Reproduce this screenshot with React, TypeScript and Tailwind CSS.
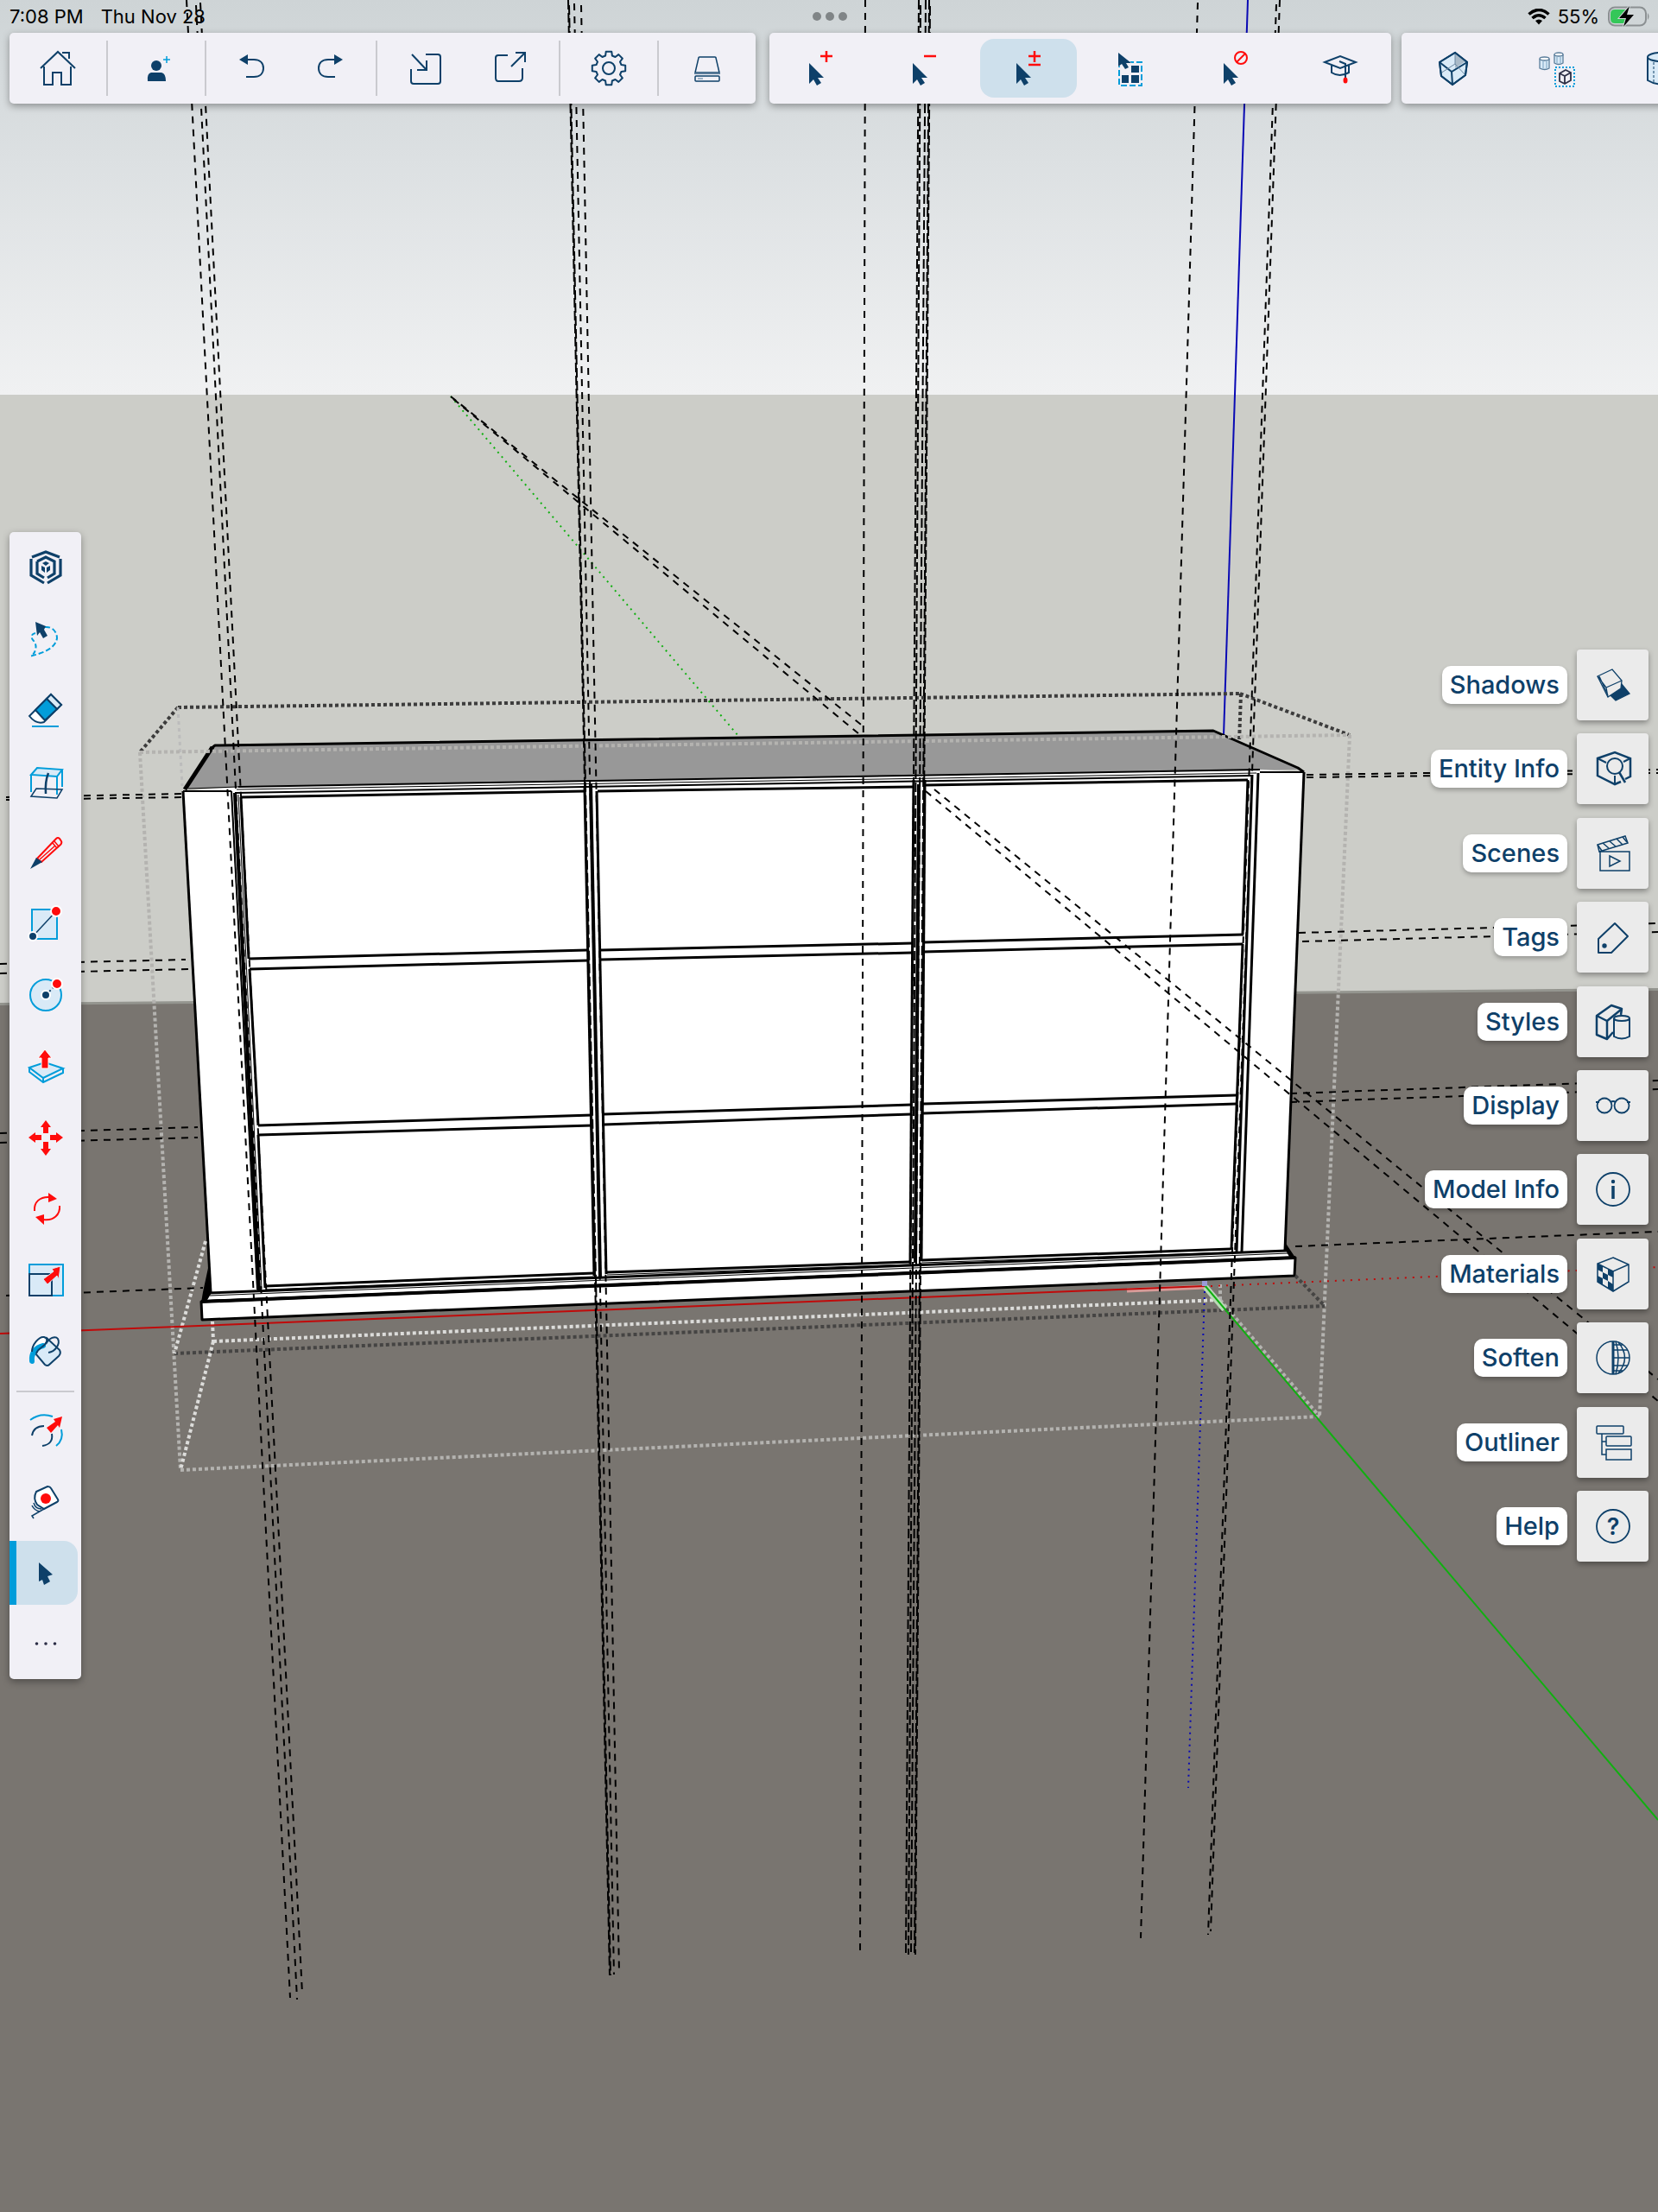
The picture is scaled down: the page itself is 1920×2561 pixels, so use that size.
import type { ReactNode } from 'react'

const NAVY = '#0e4069'
const BLUE = '#019dda'
const RED = '#ff0c0c'
const PALE = '#d9eaf7'

type Seg = [number, number, number, number]

function Icon({ children, width = 2 }: { children: ReactNode, width?: number }) {
    return (
        <svg
            viewBox="0 0 40 40"
            className="w-10 h-10 overflow-visible"
            fill="none"
            stroke={NAVY}
            strokeWidth={width}
            aria-hidden="true"
        >
            {children}
        </svg>
    )
}

function Lines({ segs, color = '#000', width = 2, dash }: { segs: Seg[], color?: string, width?: number, dash?: string }) {
    return (
        <g stroke={color} strokeWidth={width} strokeDasharray={dash} fill="none">
            {segs.map(([x1, y1, x2, y2], i) => (
                <line key={i} x1={x1} y1={y1} x2={x2} y2={y2} />
            ))}
        </g>
    )
}

// construction guides behind and across the cabinet
const guides: Seg[] = [
    [216, 0, 336, 2313], [227, 6, 344, 2315], [232, 3, 350, 2308],
    [665, 4, 711, 2286], [673, 6, 717, 2284],
    [1002, 0, 996, 2263],
    [1387, 3, 1321, 2244],
    [1478, 5, 1399, 2240], [1482, 0, 1402, 2236],
    [522, 459, 1001, 842], [525, 462, 995, 850],
    [1082, 914, 1920, 1597], [1072, 916, 1920, 1622],
    [7, 923, 211, 919], [7, 926, 211, 923],
    [1513, 897, 1920, 891], [1513, 900, 1920, 895],
    [0, 1116, 215, 1111], [0, 1127, 221, 1122],
    [1504, 1080, 1920, 1069], [1508, 1090, 1920, 1079],
    [0, 1312, 229, 1305], [0, 1323, 229, 1317],
    [1494, 1266, 1920, 1251], [1494, 1276, 1920, 1261],
    [7, 1500, 235, 1491], [1500, 1443, 1920, 1426],
]

const denseGuides: Seg[] = [
    [658, 0, 706, 2287], [659, 6, 707, 2287], [1064, 0, 1049, 2263], [1066, 6, 1052, 2263],
    [1072, 0, 1055, 2260], [1076, 0, 1059, 2263], [1077, 7, 1060, 2263],
]

const boxDark: Seg[] = [
    [206, 819, 1436, 803], [206, 819, 162, 871], [1436, 803, 1563, 851], [1437, 803, 1435, 860],
]
const boxGround: Seg[] = [[202, 1567, 1534, 1512], [1500, 1477, 1532, 1510]]
const boxGrey: Seg[] = [
    [162, 871, 1563, 851], [162, 871, 209, 1702], [1563, 851, 1528, 1640],
    [209, 1702, 1528, 1640], [1413, 1505, 1528, 1640], [1413, 1487, 1413, 1505],
]
const boxLight: Seg[] = [
    [247, 1553, 1413, 1505], [246, 1530, 247, 1553], [247, 1553, 209, 1702], [238, 1437, 202, 1567],
]

const cabinetThin: Seg[] = [
    [218, 913, 276, 911], [274, 914, 1455, 895],
    [268, 916, 298, 1493], [276, 920, 303, 1492],
    [308, 1493, 688, 1478], [703, 1476, 1053, 1464], [1067, 1462, 1425, 1450],
    [243, 1500, 1492, 1451],
]
const cabinet: Seg[] = [
    [276, 911, 1459, 891], [212, 916, 268, 916], [1459, 894, 1510, 894],
    [268, 916, 298, 1493],
    [272, 918, 677, 911], [677, 911, 1450, 898],
]
const cabinetMid: Seg[] = [
    [279, 923, 677, 916], [692, 916, 1057, 911], [1072, 909, 1445, 903],
    [279, 923, 288, 1110], [289, 1122, 299, 1303], [299, 1314, 307, 1491],
    [288, 1110, 680, 1100], [289, 1122, 681, 1112],
    [696, 1100, 1057, 1092], [696, 1111, 1057, 1103],
    [1069, 1091, 1440, 1082], [1069, 1102, 1439, 1093],
    [299, 1303, 686, 1291], [299, 1314, 686, 1303],
    [699, 1290, 1056, 1279], [699, 1302, 1056, 1290],
    [1069, 1278, 1432, 1268], [1069, 1289, 1432, 1278],
    [308, 1489, 688, 1474], [703, 1473, 1053, 1461], [1067, 1459, 1425, 1446],
    [241, 1497, 1490, 1448],
    [677, 911, 688, 1477], [1445, 903, 1439, 1082], [1439, 1093, 1426, 1447],
    [1450, 897, 1432, 1449], [1457, 895, 1438, 1449],
    [691, 916, 702, 1475], [1058, 903, 1054, 1463], [1071, 903, 1067, 1460],
    [212, 916, 244, 1496], [1510, 894, 1488, 1448],
]
const cabinetBold: Seg[] = [
    [272, 918, 300, 1494], [684, 908, 695, 1478], [1064, 908, 1060, 1462],
    [233, 1507, 1500, 1456],
]

function Scene() {
    return (
        <svg
            viewBox="0 0 1920 2561"
            preserveAspectRatio="xMidYMin slice"
            className="absolute inset-0 w-full h-full"
            role="img"
            aria-label="Cabinet model"
        >
            <defs>
                <linearGradient id="sky" x1="0" y1="0" x2="0" y2="1">
                    <stop offset="0" stopColor="#ced4d6" />
                    <stop offset="0.4" stopColor="#dce0e2" />
                    <stop offset="1" stopColor="#f0f1f2" />
                </linearGradient>
            </defs>
            <rect width="1920" height="457" fill="url(#sky)" />
            <rect y="457" width="1920" height="720" fill="#cccdc8" />
            <path d="M0 1161L1920 1144V2561H0Z" fill="#94958f" />
            <path d="M0 1164L1920 1147V2561H0Z" fill="#797570" />

            <Lines segs={[[522, 459, 855, 852]]} color="#12b012" dash="2 5" />
            <Lines segs={[[1445, 0, 1417, 852]]} color="#0a0ab4" />
            <Lines segs={boxDark} color="#3c3c3c" width={4} dash="4 3" />
            <Lines segs={[[206, 819, 211, 910]]} color="#bcbcbc" width={3} dash="4 4" />

            <path d="M248 863L1405 846L1507 891L276 911L216 913Z" fill="#989898" />
            <path d="M212 916L276 911L1459 891L1510 894L1488 1448L1500 1456L1499 1477L234 1529L233 1507L244 1495Z" fill="#fff" />
            <path d="M241 1468L245 1496L1488 1448V1438L1500 1456L233 1508L235 1496Z" fill="#000" />
            <path d="M246 1495L1488 1446L1493 1455L240 1505Z" fill="#fff" />
            <Lines segs={cabinetThin} width={1} />
            <Lines segs={cabinet} />
            <Lines segs={cabinetMid} width={3} />
            <Lines segs={cabinetBold} width={4} />
            <g stroke="#000" fill="none" strokeWidth="3" strokeLinejoin="round">
                <path d="M244 867L249 863L1405 846L1503 889L1510 894" />
                <path d="M246 865L214 914" strokeWidth="5" />
                <path d="M233 1507L234 1528L1499 1477L1500 1456Z" />
            </g>

            <Lines segs={boxGrey} color="#b4b3b0" width={4} dash="4 3" />
            <Lines segs={boxGround} color="#454443" width={4} dash="4 3" />
            <Lines segs={boxLight} color="#dcdcda" width={4} dash="4 3" />

            <Lines segs={[[1305, 1494, 1395, 1490]]} color="#d89b98" width={5} />
            <Lines segs={[[0, 1544, 1395, 1489]]} color="#c00a0a" />
            <Lines segs={[[1402, 1489, 1920, 1467]]} color="#c00a0a" dash="2 7" />
            <Lines segs={[[1396, 1490, 1418, 1516]]} color="#b9d8b6" width={7} />
            <Lines segs={[[1395, 1488, 1920, 2107]]} color="#10b010" />
            <Lines segs={[[1395, 1495, 1376, 2070]]} color="#0a0ab4" dash="2 5" />
            <Lines segs={guides} dash="8 7" />
            <Lines segs={denseGuides} width={2} dash="11 4" />
            <rect x="1392" y="1483" width="6" height="6" fill="#9b9bd8" />
        </svg>
    )
}

const cursor = 'M0 0V24L5 19L9 26L14 23L10 17H17Z'

function gearPath() {
    const pts: string[] = []
    for (let i = 0; i < 8; i++) {
        const base = (i * Math.PI) / 4 - Math.PI / 2
        const steps = [[-0.26, 15], [-0.17, 19.5], [0.17, 19.5], [0.26, 15]]
        for (const [da, r] of steps) {
            pts.push(`${(20 + r * Math.cos(base + da)).toFixed(1)} ${(20 + r * Math.sin(base + da)).toFixed(1)}`)
        }
    }
    return `M${pts.join('L')}Z`
}

const icons: Record<string, ReactNode> = {
    home: (
        <Icon>
            <path d="M0 20L20 1L40 20M25 2H33V9M4 18V39H14V25H24V39H35V18" />
        </Icon>
    ),
    user: (
        <Icon>
            <circle cx="20" cy="17" r="6" fill={NAVY} stroke="none" />
            <path d="M10 35Q9 26 14 25H26Q31 26 31 35Z" fill={NAVY} stroke="none" />
            <path d="M32 6V14M28 10H36" stroke={BLUE} strokeWidth="1.5" />
        </Icon>
    ),
    undo: (
        <Icon>
            <path d="M5 10L15 4V16Z" fill={NAVY} stroke="none" />
            <path d="M14 10H22C29 10 33 14 33 20C33 26 29 30 22 30H13" />
        </Icon>
    ),
    redo: (
        <Icon>
            <path d="M35 10L25 4V16Z" fill={NAVY} stroke="none" />
            <path d="M26 10H18C11 10 7 14 7 20C7 26 11 30 18 30H26" />
        </Icon>
    ),
    importFile: (
        <Icon>
            <path d="M20 4H34Q37 4 37 7V35Q37 38 34 38H6Q3 38 3 35V21M4 4L21 22M21 11V22H10" />
        </Icon>
    ),
    exportFile: (
        <Icon>
            <path d="M17 5H6Q3 5 3 8V31Q3 35 6 35H30Q34 35 34 31V20M21 18L37 2M26 2H37V13" />
        </Icon>
    ),
    gear: (
        <Icon>
            <path d={gearPath()} strokeLinejoin="round" />
            <circle cx="20" cy="20" r="7" />
        </Icon>
    ),
    drive: (
        <Icon width={1.5}>
            <path d="M11 7H29Q30 7 30 8L34 25H6L10 8Q10 7 11 7Z" />
            <path d="M5 26H35" strokeWidth="2" stroke="#5b7c99" />
            <rect x="6" y="29" width="28" height="6" rx="1" />
            <path d="M9 32H15" strokeWidth="2" stroke="#9fb3c6" />
        </Icon>
    ),
    addSelect: (
        <Icon>
            <path d={cursor} transform="translate(6 14)" fill={NAVY} stroke="none" />
            <path d="M26 0V13M19 6H33" stroke={RED} strokeWidth="2.5" />
        </Icon>
    ),
    subSelect: (
        <Icon>
            <path d={cursor} transform="translate(6 14)" fill={NAVY} stroke="none" />
            <path d="M19 6H33" stroke={RED} strokeWidth="2.5" />
        </Icon>
    ),
    toggleSelect: (
        <Icon>
            <path d={cursor} transform="translate(6 14)" fill={NAVY} stroke="none" />
            <path d="M27 0V13M20 6H34M20 16H34" stroke={RED} strokeWidth="2.5" />
        </Icon>
    ),
    selectAll: (
        <Icon>
            <rect x="5" y="13" width="26" height="27" stroke={BLUE} strokeDasharray="7 3" />
            <path d="M8 28H16V37H8ZM19 28H28V37H19ZM19 17H28V25H19Z" fill={NAVY} stroke="none" />
            <path d="M4 2V18L8 15L12 21L16 19L13 14H19Z" fill={NAVY} stroke="#f1f0f6" strokeWidth="1" paintOrder="stroke" />
        </Icon>
    ),
    deselect: (
        <Icon>
            <path d={cursor} transform="translate(6 14)" fill={NAVY} stroke="none" />
            <circle cx="26" cy="8" r="7" stroke={RED} />
            <path d="M21 13L31 3" stroke={RED} />
        </Icon>
    ),
    learn: (
        <Icon>
            <path d="M3 13L21 6L39 13L21 20ZM11 16V25Q20 31 31 25V16M20 12L27 15V32" />
            <ellipse cx="27" cy="34" rx="2.5" ry="3.5" fill={RED} stroke="none" />
        </Icon>
    ),
    solid: (
        <Icon>
            <path d="M4 13L22 2L36 13L34 28L19 39L6 29Z" fill={PALE} />
            <path d="M22 3L22 20L34 12Z" fill="#a9bac8" stroke="none" />
            <path d="M4 13L18 24L36 13M18 24L19 39" />
            <path d="M22 2V15L5 26M22 15L34 28" strokeWidth="1" stroke="#6b87a0" />
            <path d="M4 13L22 2L36 13L34 28L19 39L6 29Z" />
        </Icon>
    ),
    components: (
        <Icon width={1.3}>
            <path d="M0 9V20Q6 23 11 20V9M17 4V14Q22 17 27 14V4" fill={PALE} stroke="#5a7d9b" />
            <ellipse cx="5.5" cy="9" rx="5.5" ry="2" fill="#fff" stroke="#5a7d9b" />
            <ellipse cx="22" cy="4" rx="5" ry="2" fill="#fff" stroke="#5a7d9b" />
            <path d="M4 12V20M8 12V20M20 7V14M24 7V14" stroke="#8fb3ce" />
            <rect x="18" y="19" width="22" height="22" stroke={BLUE} strokeWidth="2" strokeDasharray="2 2" />
            <path d="M23 26L30 22L36 25V34L29 38L23 35ZM23 26L29 29V38M29 29L36 25" stroke="#2c2f45" strokeWidth="1.8" />
        </Icon>
    ),
    cylinder: (
        <Icon>
            <path d="M5 7V34Q20 43 35 34V7" fill={PALE} />
            <ellipse cx="20" cy="7" rx="15" ry="5" fill={PALE} />
            <path d="M12 13V38" strokeDasharray="3 2" strokeWidth="1" />
        </Icon>
    ),
    logo: (
        <Icon width={3.2}>
            <path d="M3 10V29L18 38M22 38L37 29V10M4 8L20 2L36 8" />
            <path d="M10 13V27L18 32M22 32L30 27V13L20 8L10 13" />
            <path d="M20 13L24 15L20 18L16 15ZM15 18L19 20V26L15 23ZM25 18L21 20V26L25 23Z" fill={NAVY} stroke="none" />
        </Icon>
    ),
    lasso: (
        <Icon>
            <path d="M19 6C27 5 33 11 33 19C31 31 17 36 1 40" stroke={BLUE} strokeDasharray="6 3" />
            <path d="M8 13C3 14 2 18 6 22C10 27 9 33 5 38" stroke={BLUE} strokeDasharray="5 3" />
            <path d="M8 0L20 5L18 9L22 16L17 19L13 12L10 16Z" fill={NAVY} stroke="none" />
        </Icon>
    ),
    eraser: (
        <Icon>
            <path d="M26 2L38 14L18 34Q9 37 1 27L8 20Z" fill="#fff" />
            <path d="M26 2L38 14L33 19L21 7Z" fill={PALE} />
            <path d="M21 7L33 19L19 32L8 20Z" fill={BLUE} />
            <path d="M4 39H35" stroke={BLUE} />
        </Icon>
    ),
    section: (
        <Icon>
            <path d="M3 12L10 4L39 6L33 14Z" fill={PALE} stroke={BLUE} />
            <path d="M3 12V32M33 14V35M39 6V26" stroke={BLUE} />
            <path d="M3 37L9 28L39 29L33 39Z" strokeWidth="1.5" />
            <path d="M23 10Q19 20 20 34" strokeWidth="2.5" />
        </Icon>
    ),
    pencil: (
        <Icon>
            <path d="M10 27L32 4Q34 2 36 4L38 7Q39 9 37 11L15 31Z" stroke={RED} />
            <path d="M28 9L33 15M30 7L35 13M13 28L31 12" stroke={RED} strokeWidth="1.5" />
            <path d="M2 39L9 26L16 31Z" fill={NAVY} stroke="none" />
        </Icon>
    ),
    rectangle: (
        <Icon>
            <rect x="4" y="3" width="29" height="34" fill={PALE} stroke={BLUE} />
            <path d="M5 34L32 5" strokeWidth="1.5" />
            <circle cx="5" cy="34" r="5" fill={NAVY} stroke="#fff" />
            <circle cx="32" cy="5" r="6" fill={RED} stroke="#fff" />
        </Icon>
    ),
    circle: (
        <Icon>
            <circle cx="20" cy="20" r="18" fill={PALE} stroke={BLUE} />
            <path d="M20 20L32 8" strokeDasharray="8 3 3 3" />
            <circle cx="20" cy="20" r="5" fill={NAVY} stroke="#fff" />
            <circle cx="33" cy="7" r="6" fill={RED} stroke="#fff" />
        </Icon>
    ),
    pushPull: (
        <Icon>
            <path d="M1 21L19 15L40 22L17 33Z" fill={PALE} stroke={BLUE} />
            <path d="M1 21V26L17 38L40 27V22M17 33V38" fill="none" stroke={BLUE} />
            <path d="M19 0L27 10H23V22H15V10H11Z" fill={RED} stroke="#fff" strokeWidth="1" />
        </Icon>
    ),
    move: (
        <Icon>
            <g fill={RED} stroke="none">
                <path d="M20 0L26 8H23V15H17V8H14Z" />
                <path d="M20 41L26 33H23V25H17V33H14Z" />
                <path d="M0 20L8 14V17H15V23H8V26Z" />
                <path d="M40 20L32 14V17H25V23H32V26Z" />
            </g>
        </Icon>
    ),
    rotate: (
        <Icon>
            <path d="M7 22C6 12 13 5 25 6M36 16C37 26 29 34 17 32" stroke={RED} />
            <path d="M23 1L33 8L23 12ZM8 29L18 26V38Z" fill={RED} stroke="none" />
        </Icon>
    ),
    scale: (
        <Icon>
            <rect x="1" y="2" width="39" height="36" fill={PALE} stroke={BLUE} />
            <path d="M1 13H27V38H1Z" />
            <path d="M37 4L27 7L29 10L17 19L22 25L33 15L35 19Z" fill={RED} stroke={PALE} strokeWidth="1" />
        </Icon>
    ),
    paint: (
        <Icon>
            <path d="M21 4L36 18Q38 22 35 25L24 35Q22 37 19 35L8 22Z" fill={PALE} />
            <path d="M4 20C4 12 12 2 18 3C24 5 21 11 15 15C12 17 10 19 9 22Z" fill="#fff" stroke="none" />
            <path d="M4 31C3 22 8 15 17 13" stroke={BLUE} strokeWidth="6" strokeLinecap="round" />
            <path d="M4 20C4 12 12 2 18 3C24 5 21 11 15 15C12 17 10 19 9 22" />
            <path d="M20 11C24 4 31 1 34 5C37 11 31 20 23 21" />
        </Icon>
    ),
    offset: (
        <Icon>
            <path d="M2 7Q14 -2 28 3M38 18Q41 30 32 37" stroke={BLUE} />
            <path d="M4 25Q6 14 18 14M27 23Q29 35 16 37" />
            <path d="M39 3L29 6L31 9L21 16L26 22L34 13L36 16Z" fill={RED} stroke="none" />
        </Icon>
    ),
    tape: (
        <Icon>
            <path d="M9 8L22 2Q25 2 26 4L34 17Q35 19 33 20L18 28L10 23Q5 16 9 8Z" fill="#fff" />
            <ellipse cx="20" cy="16" rx="6" ry="6" fill={RED} stroke="none" />
            <path d="M18 28L4 36L6 39M6 21Q8 28 15 28M4 24Q7 30 13 31" strokeWidth="1.5" />
        </Icon>
    ),
    select: (
        <Icon>
            <path d="M12 8V30L16 28L18 34L25 30L22 24L28 22Z" fill={NAVY} stroke="none" />
        </Icon>
    ),
    more: (
        <Icon>
            <g fill="#2b2c45" stroke="none">
                <circle cx="9.5" cy="20" r="1.8" />
                <circle cx="20" cy="20" r="1.8" />
                <circle cx="30.5" cy="20" r="1.8" />
            </g>
        </Icon>
    ),
    shadows: (
        <Icon width={1.3}>
            <path d="M29 18L39 30L23 38L17 32L29 24Z" fill={NAVY} />
            <path d="M2 10L19 2L30 15L29 24L14 34Z" fill="#ebebeb" />
            <path d="M2 10L12 23L30 15M12 23L14 34M4 10L14 32" />
        </Icon>
    ),
    entity: (
        <Icon>
            <path d="M29 35L22 38L2 28V8L22 1L40 8V29L34 32" strokeWidth="2.5" />
            <path d="M2 8L12 13M40 8L32 12M22 28V38" />
            <circle cx="22" cy="17" r="9" />
            <path d="M27 24L34 36" strokeWidth="2.5" />
        </Icon>
    ),
    scenes: (
        <Icon width={1.5}>
            <path d="M5 18H39V40H5ZM16 23L28 29L16 35ZM2 10L34 0L37 8L4 18Z" />
            <path d="M8 8L15 14M16 6L23 12M24 3L31 10M2 10L7 17M31 1L36 7" />
        </Icon>
    ),
    tags: (
        <Icon>
            <path d="M22 4L37 19L18 38H3V22Z" strokeLinejoin="round" />
            <circle cx="10" cy="30" r="2.7" fill={NAVY} stroke="none" />
        </Icon>
    ),
    styles: (
        <Icon>
            <path d="M1 13L18 1L30 5L29 12M1 13L13 19V40L1 35ZM13 19L29 6M13 40L20 32" strokeWidth="2.5" strokeLinejoin="round" />
            <path d="M21 16V37Q30 42 39 37V16" fill="#ebebeb" />
            <ellipse cx="30" cy="16" rx="9" ry="3" fill="#ebebeb" />
        </Icon>
    ),
    display: (
        <Icon width={1.8}>
            <circle cx="10" cy="20" r="8.5" />
            <circle cx="30" cy="20" r="8.5" />
            <path d="M0 16H4M36 16H40M17 16Q20 14 23 16" />
        </Icon>
    ),
    info: (
        <Icon width={1.8}>
            <circle cx="20" cy="20" r="19" />
            <circle cx="20" cy="11" r="2.2" fill={NAVY} stroke="none" />
            <path d="M20 16V31" strokeWidth="3.5" />
        </Icon>
    ),
    materials: (
        <Icon width={1.5}>
            <path d="M2 8L8 11V18L2 15ZM14 14L20 17V24L14 21ZM8 18L14 21V28L8 25ZM2 22L8 25V33L2 29ZM14 28L20 32V40L14 36Z" fill={NAVY} stroke="none" />
            <path d="M20 1L38 9V29L20 40L2 29V8ZM2 8L20 17L38 9M20 17V40" />
        </Icon>
    ),
    soften: (
        <Icon width={1.5}>
            <circle cx="20" cy="20" r="19" />
            <path d="M20 1V39" strokeWidth="3" />
            <path d="M20 11H37M20 20H39M20 29H37M23 1Q29 20 23 39M26 2Q41 20 26 38M20 5H31M20 35H31" />
        </Icon>
    ),
    outliner: (
        <Icon width={1.5}>
            <rect x="1" y="1" width="31" height="9" rx="1" />
            <rect x="12" y="13" width="29" height="11" rx="1" />
            <rect x="12" y="28" width="29" height="12" />
            <path d="M7 10V34H12M7 19H12" />
        </Icon>
    ),
    help: (
        <Icon width={1.8}>
            <circle cx="20" cy="20" r="19" />
            <text x="20" y="30" textAnchor="middle" fontSize="27" fontFamily="Inter, sans-serif" fontWeight="600" fill={NAVY} stroke="none">?</text>
        </Icon>
    ),
}

function ToolButton({ name, label, className = '' }: { name: string, label: string, className?: string }) {
    return (
        <button type="button" aria-label={label} className={`flex items-center justify-center ${className}`}>
            {icons[name]}
        </button>
    )
}

function Divider() {
    return <div className="w-[2px] h-16 bg-[#cacacf] shrink-0" />
}

const panel = 'bg-[#f1f0f6] rounded-[5px] shadow-[0_3px_8px_rgba(0,0,0,0.35)]'

function StatusBar() {
    return (
        <div className="flex items-center justify-between h-[38px] pl-[11px] pr-[9px] text-[22px] leading-[36px] text-black">
            <div className="flex flex-1 gap-5">
                <span>7:08 PM</span>
                <span>Thu Nov 28</span>
            </div>
            <div className="flex gap-[5px]">
                <span className="w-[10px] h-[10px] rounded-full bg-[#808587]" />
                <span className="w-[10px] h-[10px] rounded-full bg-[#808587]" />
                <span className="w-[10px] h-[10px] rounded-full bg-[#808587]" />
            </div>
            <div className="flex flex-1 items-center justify-end gap-[9px]">
                <svg viewBox="0 0 26 19" className="w-[26px] h-[19px]" fill="none" stroke="#000" strokeWidth="3.6" aria-hidden="true">
                    <path d="M1.5 6.5Q13 -3.5 24.5 6.5M5.5 11Q13 4.5 20.5 11" />
                    <path d="M9 14Q13 11 17 14L13 18.5Z" fill="#000" stroke="none" />
                </svg>
                <span>55%</span>
                <svg viewBox="0 0 50 24" className="w-[50px] h-6" aria-hidden="true">
                    <rect x="2" y="1.5" width="43" height="21" rx="7" fill="none" stroke="#8b9092" strokeWidth="2" />
                    <path d="M47 8Q50 12 47 16Z" fill="#8b9092" />
                    <path d="M9 4H22V20H9Q4 20 4 15V9Q4 4 9 4Z" fill="#34c759" />
                    <path d="M26 0L14 14H22L19 24L31 10H23Z" fill="#000" stroke="#d1d7d9" strokeWidth="2" paintOrder="stroke" />
                </svg>
            </div>
        </div>
    )
}

function TopBars() {
    return (
        <div className="flex gap-3 pl-[11px] overflow-x-clip">
            <div className={`flex items-center shrink-0 h-[82px] mr-1 ${panel}`}>
                <ToolButton name="home" label="Home" className="w-28 h-16" />
                <Divider />
                <ToolButton name="user" label="Add user" className="w-28 h-16" />
                <Divider />
                <div className="flex px-2">
                    <ToolButton name="undo" label="Undo" className="w-[90px] h-16" />
                    <ToolButton name="redo" label="Redo" className="w-[90px] h-16" />
                </div>
                <Divider />
                <div className="flex px-[7px]">
                    <ToolButton name="importFile" label="Import" className="w-[98px] h-16" />
                    <ToolButton name="exportFile" label="Export" className="w-[98px] h-16" />
                </div>
                <Divider />
                <ToolButton name="gear" label="Settings" className="w-28 h-16" />
                <Divider />
                <ToolButton name="drive" label="Storage" className="w-28 h-16" />
            </div>
            <div className={`flex items-center shrink-0 h-[82px] px-1 gap-2 ${panel}`}>
                <ToolButton name="addSelect" label="Add to selection" className="w-28 h-[68px]" />
                <ToolButton name="subSelect" label="Subtract from selection" className="w-28 h-[68px]" />
                <ToolButton name="toggleSelect" label="Toggle selection" className="w-28 h-[68px] rounded-2xl bg-[#cee0ec]" />
                <ToolButton name="selectAll" label="Select all" className="w-28 h-[68px]" />
                <ToolButton name="deselect" label="Select none" className="w-28 h-[68px]" />
                <ToolButton name="learn" label="Learn" className="w-28 h-[68px]" />
            </div>
            <div className={`flex items-center shrink-0 h-[82px] px-1 gap-2 ${panel}`}>
                <ToolButton name="solid" label="Solid" className="w-28 h-[68px]" />
                <ToolButton name="components" label="Components" className="w-28 h-[68px]" />
                <ToolButton name="cylinder" label="Cylinder" className="w-28 h-[68px]" />
            </div>
        </div>
    )
}

const drawTools = [
    ['logo', 'Workspace'], ['lasso', 'Lasso'], ['eraser', 'Eraser'], ['section', 'Section'],
    ['pencil', 'Line'], ['rectangle', 'Rectangle'], ['circle', 'Circle'], ['pushPull', 'Push pull'],
    ['move', 'Move'], ['rotate', 'Rotate'], ['scale', 'Scale'], ['paint', 'Paint'],
]

function ToolPalette() {
    return (
        <div className={`w-[83px] ${panel}`}>
            <div className="grid grid-rows-12 h-[990px]">
                {drawTools.map(([name, label]) => (
                    <ToolButton key={name} name={name} label={label} />
                ))}
            </div>
            <div className="h-[2px] mx-2 my-1 bg-[#cacacf]" />
            <div className="grid grid-rows-4 h-[328px]">
                <ToolButton name="offset" label="Offset" />
                <ToolButton name="tape" label="Tape measure" />
                <ToolButton name="select" label="Select" className="my-1 mr-1 pr-1 border-l-8 border-[#019dda] rounded-r-2xl bg-[#cee0ec]" />
                <ToolButton name="more" label="More" />
            </div>
        </div>
    )
}

const panels = [
    ['shadows', 'Shadows'], ['entity', 'Entity Info'], ['scenes', 'Scenes'], ['tags', 'Tags'],
    ['styles', 'Styles'], ['display', 'Display'], ['info', 'Model Info'], ['materials', 'Materials'],
    ['soften', 'Soften'], ['outliner', 'Outliner'], ['help', 'Help'],
]

function PanelList() {
    return (
        <div className="flex flex-col justify-between items-end h-[1056px] mt-[136px]">
            {panels.map(([name, label]) => (
                <button key={name} type="button" className="flex items-center gap-[11px]">
                    <span className="h-11 px-[9px] rounded-[10px] bg-white text-[#0e4069] text-[29px] leading-[44px] font-medium shadow-[0_3px_5px_rgba(0,0,0,0.25)]">
                        {label}
                    </span>
                    <span className="flex items-center justify-center w-[83px] h-[82px] rounded-[4px] bg-[#ebebeb] shadow-[0_3px_6px_rgba(0,0,0,0.35)]">
                        {icons[name]}
                    </span>
                </button>
            ))}
        </div>
    )
}

export default function App() {
    return (
        <main className="relative min-h-screen overflow-hidden bg-[#797570] font-['Inter',sans-serif]">
            <Scene />
            <div className="relative">
                <StatusBar />
                <TopBars />
                <div className="flex justify-between items-start px-[11px] pt-[496px]">
                    <ToolPalette />
                    <PanelList />
                </div>
            </div>
        </main>
    )
}
